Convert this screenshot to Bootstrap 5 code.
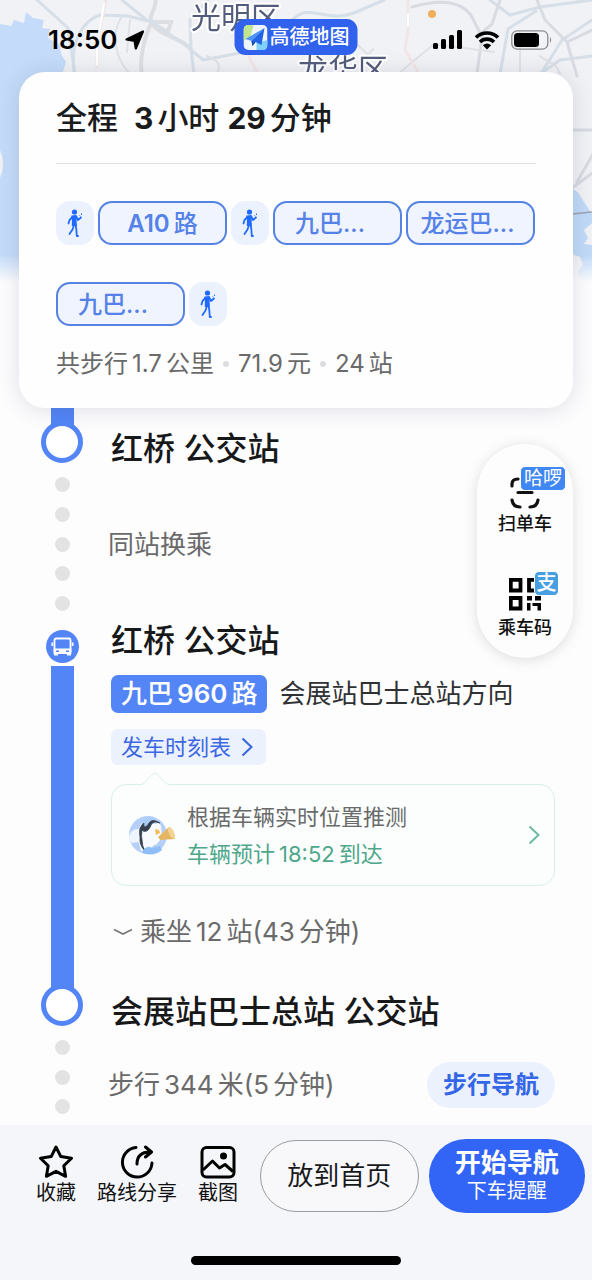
<!DOCTYPE html>
<html lang="zh-CN">
<head>
<meta charset="utf-8">
<meta name="viewport" content="width=device-width, initial-scale=1">
<title>公交路线详情</title>
<link rel="stylesheet" href="https://cdn.jsdelivr.net/npm/bootstrap@5.3.0/dist/css/bootstrap.min.css">
<style>
:root{--blue:#5385f6;--deep:#3265f6;--tint:#ecf1fe;--ink:#17181a;--muted:#6a6a6a}
body{font-family:Inter,"Noto Sans CJK SC",sans-serif;font-size:26px;line-height:32px;color:var(--ink);background:#fdfdfe}
svg{display:block;flex:none}
.screen{position:relative;min-height:100vh}
.map-bg{position:absolute;inset:0 0 auto 0;height:285px;overflow:hidden;
  -webkit-mask-image:linear-gradient(#000 255px,transparent 282px);mask-image:linear-gradient(#000 255px,transparent 282px)}
.status-bar{position:relative;height:72px;padding:7px 40px 0 48px;color:#000}
.clock{font-weight:600}
.status-icons{gap:11px}
.brand{position:absolute;left:50%;top:19px;transform:translateX(-50%);height:36px;padding:0 8px 0 9px;border-radius:11px;background:#3162ee;color:#fff;font-size:20px;line-height:36px;font-weight:500;gap:2px}
.summary{position:relative;z-index:2;margin:0 19px;padding:26px 37px 28px;border-radius:26px;background:#fefefe;box-shadow:0 2px 22px rgba(40,50,80,.15)}
.summary h1{font-size:31px;line-height:40px;font-weight:500;margin:0;color:#1a1b1d}
.n{margin:0 4px}
h1 .n{font-size:30px;font-weight:700}
.divider{height:1px;background:#dfe0e2;margin:25px 0 37px}
.chips{display:flex;flex-wrap:wrap;gap:37px 4px}
.leg{height:44px;border-radius:14px}
.leg-walk{width:38px;background:var(--tint)}
.leg-bus{width:129px;border:2px solid #5583e4;background:#eff4fe;color:#5581e8;font-size:24px;font-weight:500;line-height:42px}
.leg-short{padding-right:15px}
.leg-long{padding-right:6px}
.totals{margin-top:22px;font-size:24px;color:var(--muted)}
.totals i{width:6px;height:6px;border-radius:50%;background:#dcdde0;margin:0 9px}
.timeline{position:relative}
.step{display:flex;padding-left:41px;padding-right:37px}
.step-ride{margin-top:10px}
.rail{width:42px;flex:none;display:flex;flex-direction:column;align-items:center;margin-right:28px}
.stop{width:42px;height:42px;border:5px solid var(--blue);border-radius:50%;background:#fff;flex:none;position:relative;z-index:1}
.bus-dot{margin-top:9px}
.track{width:23px;background:var(--blue)}
.track-in{height:18px;margin-bottom:-5px}
.track-full{flex:1;margin:3px 0 -5px}
.dots{display:flex;flex-direction:column;justify-content:space-between;margin-top:14px}
.dots i{width:15px;height:15px;border-radius:50%;background:#e3e3e3}
.dots-5{height:134px}.dots-3{height:74px}
.step h2{font-size:32px;line-height:40px;font-weight:500;margin:0}
.step p{margin:0}
.transfer{padding-top:21px}
.transfer .hint{padding-top:60px}
.hint{color:var(--muted);margin-left:-3px!important}
.dir-row{margin-top:14px}
.line-tag{height:38px;padding:0 10px;border-radius:7px;background:var(--blue);color:#fff;font-weight:500;line-height:38px}
.line-tag .n{font-weight:600}
.toward{margin-left:12px;color:#303133;white-space:nowrap}
.timetable{height:36px;border:0;padding:0 13px 0 10px;border-radius:7px;background:var(--tint);color:#3c68e2;font-size:22px;gap:10px}
.live{position:relative;margin-top:19px;height:102px;border:1px solid #d8f0e8;border-radius:15px;background:#fbfefd;padding:0 14px 0 16px;font-size:22px;line-height:37px;color:var(--muted);text-decoration:none}
.live:hover{color:var(--muted)}
.live-text{margin-left:11px;padding-top:2px}
.live-tip{position:absolute;left:28px;top:-13px}
.live-eta{color:#4fa78b}
.hint-ride{margin:30px 0 36px;gap:7px;padding-left:2px;color:var(--muted)}
.arrive{padding-top:8px}
.walk-row{margin:30px 0 16px}
.walk-btn{height:46px;border:0;border-radius:23px;background:var(--tint);color:#3466e8;font-size:24px;font-weight:600;padding:0 16px}
.tools{position:absolute;z-index:1;right:19px;top:36px;width:96px;height:214px;border-radius:48px;background:#fdfdfd;box-shadow:0 2px 14px rgba(0,0,0,.13);padding:22px 0 17px}
.tool-btn{border:0;background:none;padding:0;font-size:18px;line-height:26px;font-weight:500;color:#111;display:flex;flex-direction:column;align-items:center;position:relative}
.flag{position:absolute;color:#fff;border:1px solid #fff;border-radius:5px;text-align:center;font-weight:400}
.flag-hello{left:22px;top:0;width:46px;height:25px;font-size:19px;line-height:23px;background:#3f87f3}
.flag-pay{left:36px;top:0;width:25px;height:25px;font-size:20px;line-height:22px;background:#479fe2;font-weight:500}
.actions{position:sticky;bottom:0;z-index:3;background:#f5f6f9;padding:14px 0 15px}
.action-row{padding:0 7px 0 36px}
.tool-set{margin-right:22px;gap:21px}
.act{border:0;background:none;font-size:20px;line-height:28px;color:#111;padding:0;display:flex;flex-direction:column;align-items:center;white-space:nowrap}
.pill{flex:1 1 0;max-width:240px;white-space:nowrap;border-radius:37px;padding:0}
.pill-home{height:72px;border:1px solid #9b9c9f;background:#f8f8fa;color:#17181a}
.pill-go{height:74px;border:0;background:var(--deep);color:#fff;font-weight:600;line-height:30px;margin-left:10px}
.pill-go small{display:block;font-size:20px;line-height:26px;font-weight:400}
.home-bar{width:210px;height:9px;border-radius:5px;background:#000;margin:43px auto 0}
</style>
</head>
<body>
<svg width="0" height="0" class="position-absolute" aria-hidden="true">
  <symbol id="walker" viewBox="0 0 18 30">
    <circle cx="8.500" cy="4" r="2.600" fill="#1f6bff"/>
    <path d="M6 8.500 10 8l2 4 3-2.500M6.500 9 3.500 12 2.500 15.500M8 17l-1.500 4.500L3.500 26M9.500 16l.8 5 .5 7H12" fill="none" stroke="#1f6bff" stroke-width="1.800" stroke-linecap="round" stroke-linejoin="round"/>
    <path d="M6 8h4.500l.3 10H5.800z" fill="#1f6bff"/>
    <path d="m13.500 7.500 1 .8M15.500 5.500V7" stroke="#1f6bff" stroke-width="1"/>
  </symbol>
</svg>
<div class="screen d-flex flex-column">
  <div class="map-bg">
    <svg width="100%" height="285" viewBox="0 0 592 285" preserveAspectRatio="xMidYMin slice" aria-hidden="true">
      <rect width="592" height="285" fill="#f1f2f5"/>
      <path d="M0 24 11 26 14 20 24 23 26 12 33 18 44 20 42 28 50 29 48 38 60 45 61 54 66 62 62 75V285H0z" fill="#c4dcf9"/>
      <path d="M0 150q6 14 0 28z" fill="#f1f2f5"/>
      <path d="M560 182 592 200V285H560zM574 190l18 25v70h-32v-95z" fill="#c0daf8"/>
      <path d="m575 188 17 8v18zM592 223l-8 7 4 8-4 6 8 1zM572 254l8 3 3 8-5 6 2 10-10 4z" fill="#f1f2f5"/>
      <path d="M572 214l20-2" stroke="#9aa3b2" stroke-width="1.500"/>
      <g fill="none" stroke-linecap="round">
        <path d="M156 0c-2 15-8 15-4 24 8 12 32 14 40 27M152 22c-8 15-13 38-10 52M152 22l19 0-3 10-15-8" stroke="#dcdee2" stroke-width="4"/>
        <path d="M37 0 68 28 75 74M74 72C70 40 84 20 100 15l28 1 24 6M122 0l26 21M152 22l39 27 3 25M208 0l-18 20 1 30 12 10 42-8M290 22c20-22 34 2 64-9L384 0M490 0l20 15 30-8 52-7M500 74l8-45 28-18M540 74l20-14 32-4M592 20l-30 20-22 35" stroke="#d6dfe8" stroke-width="3"/>
        <path d="M412 7c28-8 50-6 60 10l10 20-5 36M500 0l-8 24-12 10M592 30l-25 12-22-22-8-20M567 42l10 34M572 130h20M572 188l22-16M577 182l16-28" stroke="#d8dbe1" stroke-width="3"/>
        <path d="M121 18c-9 14-8 38 9 56M207 56c12 4 14 10 10 18M350 20c-18 8-24 30-30 34M520 32v42M398 74l36-30 60 8M560 74c-4-12-10-10-20-18M358 45l10 10 5-6M130 20l-3 32" stroke="#dfe1e5" stroke-width="2"/>
        <path d="M106 0 97 45v22M408 0v30l-3 20 14 24M248 55l10 19" stroke="#f2e5e7" stroke-width="3"/>
        <path d="M104 4 97 45v20M408 14v12" stroke="#fff" stroke-width="2"/>
      </g>
      <circle cx="432" cy="14" r="4" fill="#eeb05a"/>
      <g font-family="'Noto Sans CJK SC',sans-serif" font-size="30" font-weight="400" fill="#535d7b" stroke="#fff" stroke-width="4" stroke-linejoin="round" paint-order="stroke">
        <text x="191" y="28">光明区</text>
        <text x="298" y="80">龙华区</text>
      </g>
    </svg>
  </div>

  <header class="status-bar d-flex align-items-center">
    <span class="clock">18:50</span>
    <svg class="ms-2" width="20" height="20" viewBox="0 0 20 20" aria-hidden="true"><path d="M18 1.500 1.500 9.500l8 1.300 1.300 7.700z" fill="#000" stroke="#000" stroke-width="2.200" stroke-linejoin="round"/></svg>
    <div class="brand d-flex align-items-center">
      <svg width="24" height="25" viewBox="0 0 24 25" aria-hidden="true"><rect width="24" height="25" rx="5" fill="#eef6fb"/><path d="M5 0h5L7 12 0 16V5Q0 0 5 0z" fill="#bfe58f"/><path d="m13 18 11-3v5q0 5-5 5h-6z" fill="#7fd0fb"/><path d="M21 3 2 14l6 2z" fill="#4c94fb"/><path d="M21 3 8 16l1 5 3-4 6 3z" fill="#2364e4"/><path d="m8 16 1 5 3-4z" fill="#164bb8"/></svg>
      <span>高德地图</span>
    </div>
    <div class="status-icons d-flex align-items-center ms-auto">
      <svg width="30" height="20" viewBox="0 0 30 20" aria-hidden="true"><rect y="13" width="5" height="6" rx="1.500"/><rect x="8" y="9" width="5" height="10" rx="1.500"/><rect x="16" y="5" width="5" height="14" rx="1.500"/><rect x="24" width="5" height="19" rx="1.500"/></svg>
      <svg width="26" height="20" viewBox="0 0 26 20" aria-hidden="true"><path d="M2 7.500a15.600 15.600 0 0 1 22 0M6 12a9.900 9.900 0 0 1 14 0" fill="none" stroke="#000" stroke-width="3.600"/><path d="m8.800 15.200q4.200-3.600 8.400 0L13 19.600z"/></svg>
      <svg width="41" height="20" viewBox="0 0 41 20" aria-hidden="true"><rect x=".8" y=".8" width="36" height="18.400" rx="5.500" fill="none" stroke="#8a8b8d" stroke-width="1.300"/><rect x="3" y="3" width="25" height="14" rx="3.500"/><path d="M39 7q2 3 0 6z" fill="#777"/></svg>
    </div>
  </header>

  <section class="summary">
    <h1>全程<span class="n ms-3">3</span>小时<span class="n ms-2">29</span>分钟</h1>
    <div class="divider"></div>
    <div class="chips">
      <span class="leg leg-walk d-flex align-items-center justify-content-center"><svg width="18" height="30"><use href="#walker"/></svg></span>
      <span class="leg leg-bus text-center"><span class="fw-semibold me-1">A10</span>路</span>
      <span class="leg leg-walk d-flex align-items-center justify-content-center"><svg width="18" height="30"><use href="#walker"/></svg></span>
      <span class="leg leg-bus leg-short text-center">九巴...</span>
      <span class="leg leg-bus leg-long text-center">龙运巴...</span>
      <span class="leg leg-bus leg-short text-center">九巴...</span>
      <span class="leg leg-walk d-flex align-items-center justify-content-center"><svg width="18" height="30"><use href="#walker"/></svg></span>
    </div>
    <div class="totals d-flex align-items-center"><span>共步行<span class="n">1.7</span>公里</span><i></i><span>71.9<span class="ms-1">元</span></span><i></i><span>24<span class="ms-1">站</span></span></div>
  </section>

  <main class="timeline flex-grow-1">
    <div class="step">
      <div class="rail"><div class="track track-in"></div><div class="stop"></div><div class="dots dots-5"><i></i><i></i><i></i><i></i><i></i></div></div>
      <div class="transfer flex-grow-1"><h2>红桥 公交站</h2><p class="hint">同站换乘</p></div>
    </div>
    <div class="step step-ride">
      <div class="rail">
        <svg class="bus-dot" width="33" height="33" viewBox="0 0 33 33" aria-hidden="true"><circle cx="16.500" cy="16.500" r="16.500" fill="#5385f6"/><path d="M10 8.500h13a1.500 1.500 0 0 1 1.500 1.500v11h-16V10A1.500 1.500 0 0 1 10 8.500z" fill="none" stroke="#fff" stroke-width="1.800"/><path d="M7.600 18.500h17.800V24H7.600zM5.500 12.500h1.700V16H5.500zM25.800 12.500h1.700V16h-1.700zM8 23h4v2.500H8zM21 23h4v2.500h-4z" fill="#fff"/><path d="M10 20.500h3V22h-3zM20 20.500h3V22h-3z" fill="#5385f6"/></svg>
        <div class="track track-full"></div>
      </div>
      <div class="flex-grow-1">
        <h2>红桥 公交站</h2>
        <div class="dir-row d-flex align-items-center"><span class="line-tag text-nowrap">九巴<span class="n">960</span>路</span><span class="toward">会展站巴士总站方向</span></div>
        <button type="button" class="timetable d-flex align-items-center mt-3">发车时刻表<svg width="12" height="20" viewBox="0 0 12 20" aria-hidden="true"><path d="m1.500 1.500 9 8.500-9 8.500" fill="none" stroke="#3c68e2" stroke-width="2.200"/></svg></button>
        <a href="#" class="live d-flex align-items-center">
          <svg class="live-tip" width="30" height="13" viewBox="0 0 30 13" aria-hidden="true"><path d="M0 13Q2 13 4 11L13 2q2-2 4 0l9 9q2 2 4 2" fill="#fbfefd" stroke="#d8f0e8"/></svg>
          <svg width="48" height="42" viewBox="0 0 48 42" aria-hidden="true"><circle cx="20" cy="21" r="19" fill="#b5cff8"/><path d="M1 23Q3 14 11 15v13L4 29Q1 27 1 23z" fill="#edf5ff"/><path d="M13 37q-6-18 1-29Q27-2 33 12l1 12-11 10z" fill="#f7fbff"/><path d="M13 8Q23-2 32 9l-8 1-9 8z" fill="#a9cdf5"/><path d="M32 9q-7-3-9 2c-2 6-6 8-9 5q-1 6 0 10 0 6 3 11-6-6-5-14-2-10 4-14c-1 6 3 4 5 0q3-5 11 0z" fill="#37404f" stroke="#37404f" stroke-width=".8"/><path d="m27 15 4 1 1 3-4 2z" fill="#eebc58"/><path d="M14 39q4-9 10-5l8-2 2 4q-8 7-20 3z" fill="#8fbdf8"/><path d="m30 23 11-10q5 1 6 12l-15 1z" fill="#e5b662"/><ellipse cx="43.500" cy="19" rx="2.500" ry="6.500" transform="rotate(-25 43.500 19)" fill="#f4d493"/><path d="M24 25q5-3 8 1l-4 5-5-2z" fill="#f7fbff"/></svg>
          <span class="live-text flex-grow-1">根据车辆实时位置推测<br><span class="live-eta">车辆预计<span class="n">18:52</span>到达</span></span>
          <svg width="12" height="20" viewBox="0 0 12 20" aria-hidden="true"><path d="m1.500 1.500 9 8.500-9 8.500" fill="none" stroke="#6fb9a4" stroke-width="2"/></svg>
        </a>
        <div class="hint-ride d-flex align-items-center"><svg width="20" height="8" viewBox="0 0 20 8" aria-hidden="true"><path d="m1 1.500 9 4.500 9-4.500" fill="none" stroke="#777" stroke-width="1.700"/></svg><span>乘坐<span class="n">12</span>站(43<span class="ms-1">分钟)</span></span></div>
      </div>
    </div>
    <div class="step">
      <div class="rail"><div class="stop"></div><div class="dots dots-3"><i></i><i></i><i></i></div></div>
      <div class="arrive flex-grow-1">
        <h2>会展站巴士总站 公交站</h2>
        <div class="walk-row d-flex align-items-center justify-content-between"><p class="hint">步行<span class="n">344</span>米(5<span class="ms-1">分钟)</span></p><button type="button" class="walk-btn">步行导航</button></div>
      </div>
    </div>

    <div class="tools d-flex flex-column align-items-center justify-content-between">
      <button type="button" class="tool-btn">
        <svg width="30" height="45" viewBox="0 0 30 45" aria-hidden="true"><path d="M2 20v-2q0-5 6-5M2 34q1 7 8 7M20 41q7 0 8-7M8 26.500h14" fill="none" stroke="#111" stroke-width="3.200" stroke-linecap="round"/></svg>
        <span class="flag flag-hello">哈啰</span>扫单车</button>
      <button type="button" class="tool-btn">
        <svg width="32" height="44" viewBox="0 0 32 44" aria-hidden="true"><path d="M1.800 8.800h9.700v10.700H1.800zM1.800 27h9.700v10.500H1.800zM20 8.800h8v10.700h-8z" fill="none" stroke="#000" stroke-width="3.800"/><path d="M18 25h5v4.500h-5zM26 25h6v4.500h-6zM18 32h3.500v7.500H18zM23.500 32H32v7.500h-3.500V35h-5z"/></svg>
        <span class="flag flag-pay">支</span>乘车码</button>
    </div>
  </main>

  <footer class="actions">
    <div class="action-row d-flex align-items-center">
      <div class="tool-set d-flex">
        <button type="button" class="act"><svg width="36" height="34" viewBox="0 0 36 34" aria-hidden="true"><path d="m18 2 4.800 9.600 10.700 1.600-7.700 7.500 1.800 10.600L18 26.300l-9.600 5 1.800-10.600-7.700-7.500 10.700-1.600z" fill="none" stroke="#000" stroke-width="3" stroke-linejoin="round"/></svg>收藏</button>
        <button type="button" class="act"><svg width="36" height="34" viewBox="0 0 36 34" aria-hidden="true"><path d="M17 2.500A14.800 14.800 0 1 0 33 18M18 19q0-12 13-12M26.500 2l6 5-6 5" fill="none" stroke="#000" stroke-width="3" stroke-linecap="round" stroke-linejoin="round"/></svg>路线分享</button>
        <button type="button" class="act"><svg width="36" height="34" viewBox="0 0 36 34" aria-hidden="true"><rect x="2" y="2.500" width="32" height="29.500" rx="4.500" fill="none" stroke="#000" stroke-width="3"/><path d="m3 25 9.500-9 7 7 5.500-3.500 8 7" fill="none" stroke="#000" stroke-width="3" stroke-linejoin="round"/><circle cx="23.500" cy="11" r="3.500"/></svg>截图</button>
      </div>
      <button type="button" class="pill pill-home">放到首页</button>
      <button type="button" class="pill pill-go">开始导航<small>下车提醒</small></button>
    </div>
    <div class="home-bar"></div>
  </footer>
</div>
<script src="https://cdn.jsdelivr.net/npm/bootstrap@5.3.0/dist/js/bootstrap.bundle.min.js"></script>
</body>
</html>
